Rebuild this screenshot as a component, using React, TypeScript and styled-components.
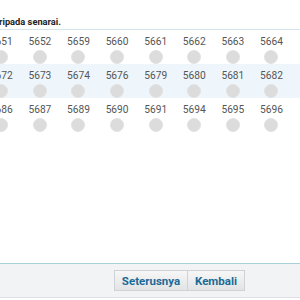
import React from "react";
import styled, { createGlobalStyle } from "styled-components";

const GlobalStyle = createGlobalStyle`
  html, body { margin: 0; padding: 0; background: #ffffff; }
  body { font-family: Roboto, "Noto Sans", Arial, sans-serif; }
`;

const Page = styled.div`
  width: 300px;
  height: 300px;
  overflow: hidden;
  display: flex;
  flex-direction: column;
  background: #ffffff;
`;

const Instruction = styled.div`
  width: 100%;
  height: 30px;
  display: flex;
  align-items: flex-end;
  padding-bottom: 2px;
  box-sizing: border-box;
  border-bottom: 1px solid #d4e5ee;
`;

const InstructionInner = styled.div`
  width: 61px;
  display: flex;
  justify-content: flex-end;
  flex-shrink: 0;
`;

const InstructionText = styled.span`
  white-space: nowrap;
  font-size: 9.3px;
  font-weight: 700;
  color: #222;
`;

const Grid = styled.div`
  display: flex;
  flex-direction: column;
  margin-left: -18px;
`;

const Row = styled.div<{ $alt?: boolean }>`
  display: grid;
  grid-template-columns: repeat(8, 38.6px);
  height: 34px;
  background: ${(p) => (p.$alt ? "#eef6fc" : "#ffffff")};
`;

const Cell = styled.label`
  display: flex;
  flex-direction: column;
  align-items: center;
  padding-top: 6px;
  gap: 3px;
`;

const Num = styled.span`
  font-size: 10.2px;
  line-height: 11px;
  color: #555;
`;

const Radio = styled.span`
  width: 12px;
  height: 12px;
  border-radius: 50%;
  background: #dcdcdc;
  border: 1px solid #e2e2e2;
`;

const Spacer = styled.div`
  flex: 1;
`;

const Footer = styled.div`
  height: 35px;
  border-top: 1px solid #a9d0d9;
  border-bottom: 1px solid #dcdfe3;
  background: #f2f3f5;
  display: flex;
  justify-content: flex-end;
  align-items: flex-start;
  padding: 6px 55px 0 0;
  box-sizing: border-box;
  margin-bottom: 2px;
`;

const Button = styled.button<{ $w: number }>`
  width: ${(p) => p.$w}px;
  height: 21px;
  margin: 0;
  padding: 0;
  border: 1px solid #cfd2d6;
  background: linear-gradient(#f7f7f7, #e2e3e5);
  color: #1b6a97;
  font-family: Roboto, "Noto Sans", Arial, sans-serif;
  font-size: 11.5px;
  font-weight: 700;
  cursor: pointer;
  & + & { border-left: none; }
`;

const rows = [
  ["5651", "5652", "5659", "5660", "5661", "5662", "5663", "5664"],
  ["5672", "5673", "5674", "5676", "5679", "5680", "5681", "5682"],
  ["5686", "5687", "5689", "5690", "5691", "5694", "5695", "5696"],
];

export default function App() {
  return (
    <Page>
      <GlobalStyle />
      <Instruction>
        <InstructionInner>
          <InstructionText>Sila pilih satu nombor daripada senarai.</InstructionText>
        </InstructionInner>
      </Instruction>
      <Grid>
        {rows.map((r, i) => (
          <Row key={i} $alt={i === 1}>
            {r.map((n) => (
              <Cell key={n}>
                <Num>{n}</Num>
                <Radio />
              </Cell>
            ))}
          </Row>
        ))}
      </Grid>
      <Spacer />
      <Footer>
        <Button $w={74}>Seterusnya</Button>
        <Button $w={57}>Kembali</Button>
      </Footer>
    </Page>
  );
}
